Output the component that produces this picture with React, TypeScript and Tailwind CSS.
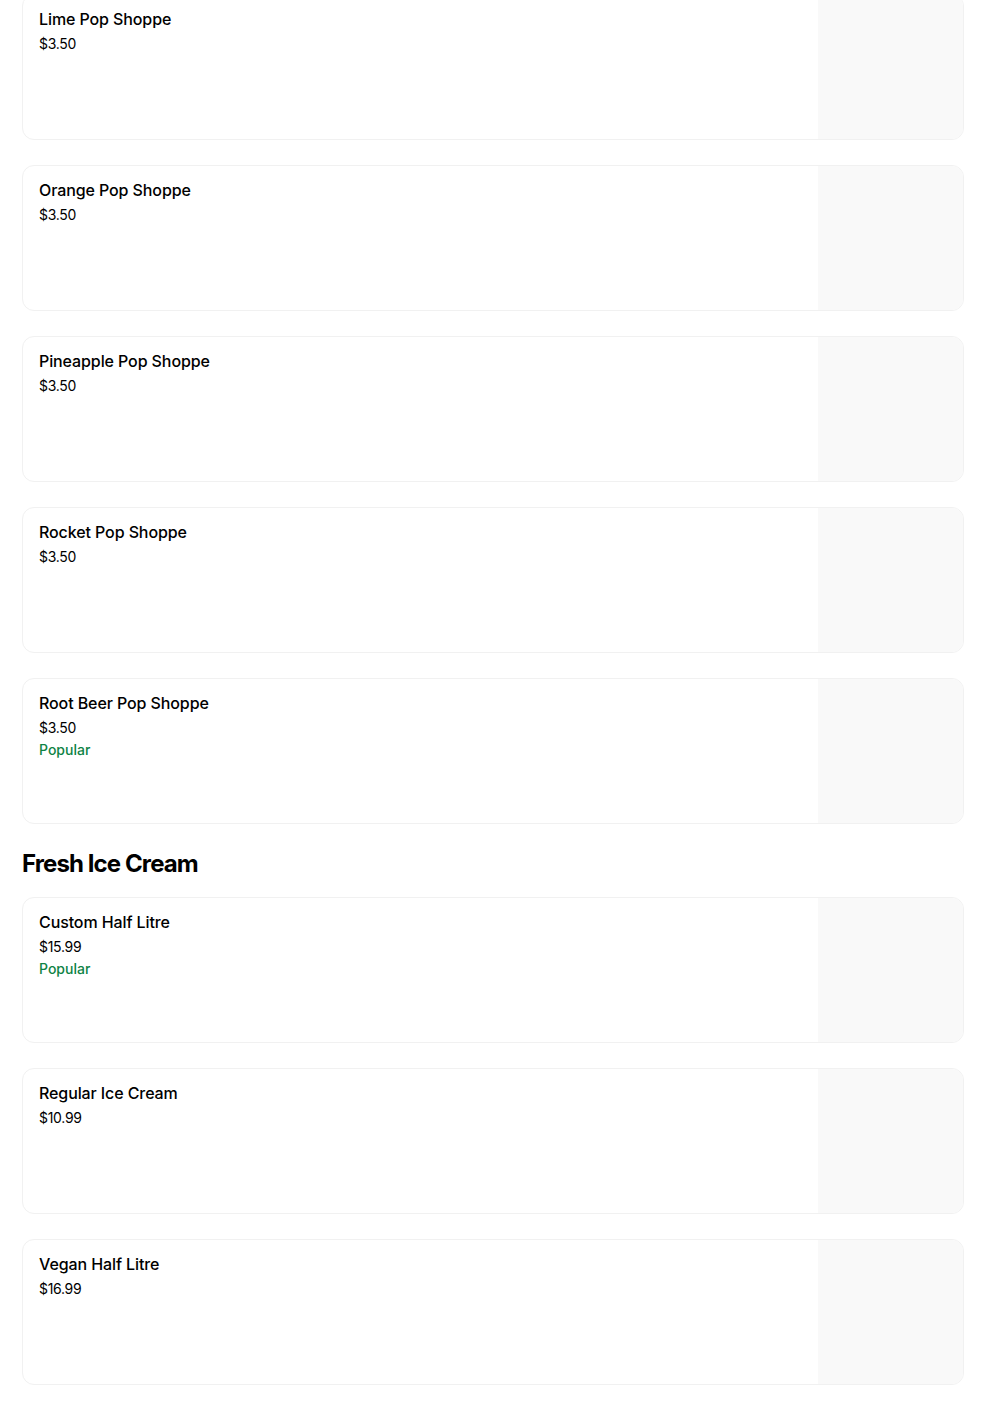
import React from "react";

interface IItem {
  name: string;
  price: string;
  popular?: boolean;
}

const pops: IItem[] = [
  { name: "Lime Pop Shoppe", price: "$3.50" },
  { name: "Orange Pop Shoppe", price: "$3.50" },
  { name: "Pineapple Pop Shoppe", price: "$3.50" },
  { name: "Rocket Pop Shoppe", price: "$3.50" },
  { name: "Root Beer Pop Shoppe", price: "$3.50", popular: true },
];

const iceCream: IItem[] = [
  { name: "Custom Half Litre", price: "$15.99", popular: true },
  { name: "Regular Ice Cream", price: "$10.99" },
  { name: "Vegan Half Litre", price: "$16.99" },
];

const ItemCard = ({ item }: { item: IItem }) => (
  <div className="flex h-[146px] overflow-hidden rounded-xl border border-[#f1f1f1] bg-white">
    <div className="flex flex-1 flex-col px-4 pt-[12px]">
      <p className="text-base leading-6 font-medium tracking-[-0.1px] text-black">{item.name}</p>
      <p className="mt-[3px] text-sm leading-5 tracking-[-0.3px] text-black">{item.price}</p>
      {item.popular && (
        <p className="mt-[2px] text-sm leading-5 font-medium text-[#0e8345]">Popular</p>
      )}
    </div>
    <div className="h-full w-[145px] bg-[#f9f9f9]"></div>
  </div>
);

const App = () => {
  return (
    <div
      className="min-h-[1416px] bg-white pl-[22px] pr-[20px]"
      style={{ fontFamily: "Inter, 'Noto Sans', sans-serif" }}
    >
      <div className="-mt-[6px] flex flex-col gap-[25px]">
        {pops.map((item) => (
          <ItemCard item={item} key={item.name} />
        ))}
      </div>
      <h2 className="mt-[26px] mb-[19px] text-2xl leading-7 font-bold tracking-[-0.9px] text-black">
        Fresh Ice Cream
      </h2>
      <div className="flex flex-col gap-[25px]">
        {iceCream.map((item) => (
          <ItemCard item={item} key={item.name} />
        ))}
      </div>
    </div>
  );
};

export default App;
